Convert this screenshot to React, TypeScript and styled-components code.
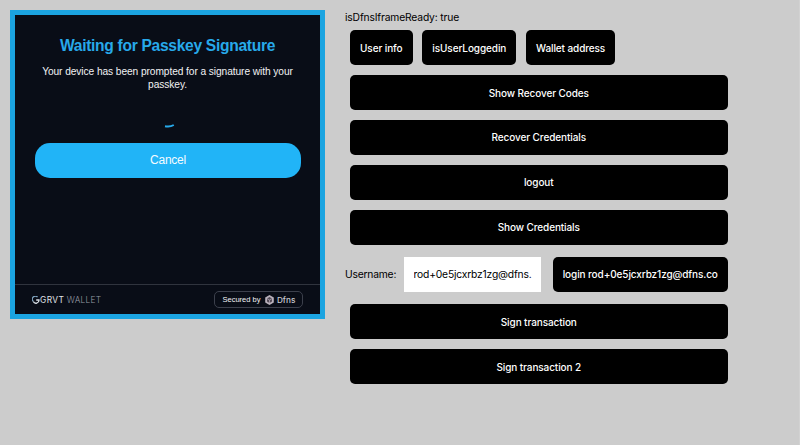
import React from "react";
import styled, { createGlobalStyle } from "styled-components";

const GlobalStyle = createGlobalStyle`
  * { box-sizing: border-box; }
  body { margin: 0; background: #cccccc; overflow: hidden; }
`;

const Page = styled.main`
  display: flex;
  align-items: flex-start;
  gap: 20px;
  width: 800px;
  height: 445px;
  padding: 10px 0 0 10px;
  background: #cccccc;
  border-right: 1px solid #d2d2d2;
  font-family: Inter, sans-serif;
  color: #000;
`;

const WalletFrame = styled.section`
  display: flex;
  flex-direction: column;
  flex: none;
  width: 315px;
  height: 309px;
  border: 5px solid #1ba4e1;
  background: #090d17;
  color: #f1f2f4;
  font-family: "Liberation Sans", Arial, sans-serif;
`;

const WalletBody = styled.div`
  display: flex;
  flex-direction: column;
  align-items: center;
  flex: 1;
  padding: 20px 20px 0;
`;

const Title = styled.h1`
  margin: 0;
  font-size: 15.6px;
  line-height: 21px;
  font-weight: 700;
  letter-spacing: -0.3px;
  color: #27a9ea;
  white-space: nowrap;
`;

const Message = styled.p`
  margin: 10px 0 0;
  width: 262px;
  font-size: 10.2px;
  letter-spacing: -0.08px;
  line-height: 12.5px;
  text-align: center;
`;

const Spinner = styled.svg`
  display: block;
  width: 30px;
  height: 30px;
  margin: 8px 0 14px;
`;

const CancelButton = styled.button`
  align-self: flex-start;
  width: 266px;
  height: 35px;
  padding: 0;
  border: 0;
  border-radius: 15px;
  background: #21b4f7;
  color: #f4fbff;
  font: 12px/33px "Liberation Sans", Arial, sans-serif;
  letter-spacing: -0.25px;
`;

const WalletFooter = styled.footer`
  display: flex;
  align-items: center;
  justify-content: space-between;
  height: 30px;
  padding: 0 17px 0 17px;
  border-top: 1px solid #30343e;
`;

const Brand = styled.div`
  display: flex;
  align-items: center;
  font: 400 8.4px Inter, sans-serif;
  letter-spacing: 0.4px;
  color: #e0e3e8;
  svg { width: 8px; height: 8px; }
`;

const BrandSuffix = styled.span`
  margin-left: 2.5px;
  font-weight: 300;
  letter-spacing: 0.25px;
  color: #969ba5;
`;

const SecuredBadge = styled.div`
  display: flex;
  align-items: center;
  width: 89px;
  height: 17px;
  padding-left: 7.5px;
  border: 1px solid #3c404c;
  border-radius: 5px;
  font-size: 7.5px;
  white-space: nowrap;
  svg { width: 9px; height: 10px; margin: 0 2.5px 0 5px; }
`;

const DfnsName = styled.span`
  font: 500 8.2px Inter, sans-serif;
  color: #c9cbd2;
`;

const Controls = styled.section`
  display: flex;
  flex-direction: column;
  width: 382.5px;
`;

const Status = styled.div`
  height: 15px;
  line-height: 15px;
  font-size: 10.3px;
  letter-spacing: -0.16px;
  white-space: nowrap;
`;

const ButtonRow = styled.div`
  display: flex;
  gap: 9.8px;
  margin: 5px 0 10px 5px;
`;

const ActionStack = styled.div`
  display: flex;
  flex-direction: column;
  gap: 9.9px;
  margin-left: 5px;
`;

const ActionButton = styled.button<{ $width?: number }>`
  flex: none;
  width: ${({ $width }) => ($width ? `${$width}px` : "100%")};
  height: 35px;
  padding: 0;
  border: 0;
  border-radius: 5px;
  background: #000;
  color: #fff;
  font: 500 10px Inter, sans-serif;
  letter-spacing: -0.1px;
  white-space: nowrap;
`;

const LoginRow = styled.div`
  display: flex;
  align-items: center;
  margin: 12.3px 0 12.5px;
`;

const Label = styled.label`
  width: 59px;
  font-size: 10.3px;
  letter-spacing: -0.2px;
`;

const UsernameInput = styled.input`
  width: 136.5px;
  height: 35px;
  margin-right: 12.5px;
  padding: 0 9px 0 9.5px;
  border: 0;
  border-radius: 0;
  outline: 0;
  background: #fff;
  color: #000;
  font: 10.3px Inter, sans-serif;
  letter-spacing: -0.18px;
`;

export default function App() {
  return (
    <>
      <GlobalStyle />
      <Page>
        <WalletFrame>
          <WalletBody>
            <Title>Waiting for Passkey Signature</Title>
            <Message>Your device has been prompted for a signature with your passkey.</Message>
            <Spinner viewBox="0 0 30 30" fill="none">
              <path d="M12 27.2q4.8 1.1 8.8-1.2" stroke="#27a9ea" strokeWidth="2" />
            </Spinner>
            <CancelButton>Cancel</CancelButton>
          </WalletBody>
          <WalletFooter>
            <Brand>
              <svg viewBox="0 0 8 8" fill="none" strokeWidth="1.3">
                <path d="M5.5 1.1A3 3 0 0 0 1.2 5.3" stroke="#7fa2be" />
                <path d="M1.3 5.5A3 3 0 0 0 7 4H4.2" stroke="#dce2e8" />
              </svg>
              GRVT
              <BrandSuffix>WALLET</BrandSuffix>
            </Brand>
            <SecuredBadge>
              Secured by
              <svg viewBox="0 0 9 10">
                <path d="M4.5 0 8.8 2.5v5L4.5 10 .2 7.5v-5z" fill="#b8b0bb" />
                <path d="M4.5 2.1 7 3.6v2.9L4.5 8 2 6.5V3.6z" fill="#514955" />
                <path d="M2 3.6 4.5 5 7 3.6M4.5 5v3" stroke="#aaa0ae" strokeWidth=".8" fill="none" />
              </svg>
              <DfnsName>Dfns</DfnsName>
            </SecuredBadge>
          </WalletFooter>
        </WalletFrame>
        <Controls>
          <Status>isDfnsIframeReady: true</Status>
          <ButtonRow>
            <ActionButton $width={62.5}>User info</ActionButton>
            <ActionButton $width={94}>isUserLoggedin</ActionButton>
            <ActionButton $width={89}>Wallet address</ActionButton>
          </ButtonRow>
          <ActionStack>
            <ActionButton>Show Recover Codes</ActionButton>
            <ActionButton>Recover Credentials</ActionButton>
            <ActionButton>logout</ActionButton>
            <ActionButton>Show Credentials</ActionButton>
          </ActionStack>
          <LoginRow>
            <Label htmlFor="username">Username:</Label>
            <UsernameInput id="username" defaultValue="rod+0e5jcxrbz1zg@dfns." />
            <ActionButton $width={174.5}>login rod+0e5jcxrbz1zg@dfns.co</ActionButton>
          </LoginRow>
          <ActionStack>
            <ActionButton>Sign transaction</ActionButton>
            <ActionButton>Sign transaction 2</ActionButton>
          </ActionStack>
        </Controls>
      </Page>
    </>
  );
}
